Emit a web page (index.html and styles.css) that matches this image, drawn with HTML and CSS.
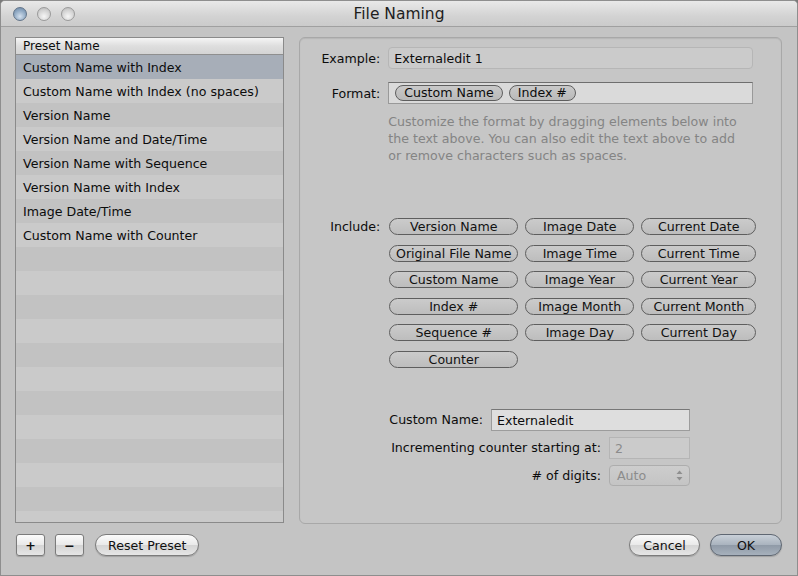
FILE: index.html
```html
<!DOCTYPE html>
<html lang="en">

<head>
    <meta charset="UTF-8">
    <title>File Naming</title>
    <link rel="stylesheet" href="styles.css">
</head>

<body>
    <div class="window">
        <div class="titlebar">
            <div class="lights">
                <span class="light close"></span>
                <span class="light"></span>
                <span class="light"></span>
            </div>
            <div class="title">File Naming</div>
            <div></div>
        </div>

        <div class="main">
            <div class="list">
                <div class="list-head">Preset Name</div>
                <div class="row selected">Custom Name with Index</div>
                <div class="row">Custom Name with Index (no spaces)</div>
                <div class="row">Version Name</div>
                <div class="row">Version Name and Date/Time</div>
                <div class="row">Version Name with Sequence</div>
                <div class="row">Version Name with Index</div>
                <div class="row">Image Date/Time</div>
                <div class="row">Custom Name with Counter</div>
                <div class="row"></div>
                <div class="row"></div>
                <div class="row"></div>
                <div class="row"></div>
                <div class="row"></div>
                <div class="row"></div>
                <div class="row"></div>
                <div class="row"></div>
                <div class="row"></div>
                <div class="row"></div>
                <div class="row"></div>
                <div class="row"></div>
            </div>

            <div class="panel">
                <div class="form-row first">
                    <label class="label">Example:</label>
                    <div class="field example">Externaledit 1</div>
                </div>
                <div class="form-row second">
                    <label class="label">Format:</label>
                    <div class="field format">
                        <span class="token">Custom Name</span>
                        <span class="token">Index #</span>
                    </div>
                </div>
                <p class="help">Customize the format by dragging elements below into<br>
                    the text above. You can also edit the text above to add<br>
                    or remove characters such as spaces.</p>

                <div class="form-row include">
                    <label class="label">Include:</label>
                    <div class="pills">
                        <span class="pill">Version Name</span>
                        <span class="pill">Image Date</span>
                        <span class="pill">Current Date</span>
                        <span class="pill">Original File Name</span>
                        <span class="pill">Image Time</span>
                        <span class="pill">Current Time</span>
                        <span class="pill">Custom Name</span>
                        <span class="pill">Image Year</span>
                        <span class="pill">Current Year</span>
                        <span class="pill">Index #</span>
                        <span class="pill">Image Month</span>
                        <span class="pill">Current Month</span>
                        <span class="pill">Sequence #</span>
                        <span class="pill">Image Day</span>
                        <span class="pill">Current Day</span>
                        <span class="pill">Counter</span>
                    </div>
                </div>

                <div class="options">
                    <div class="opt-row">
                        <label>Custom Name:</label>
                        <div class="input name">Externaledit</div>
                    </div>
                    <div class="opt-row">
                        <label>Incrementing counter starting at:</label>
                        <div class="input small disabled">2</div>
                    </div>
                    <div class="opt-row">
                        <label># of digits:</label>
                        <div class="select">
                            <span>Auto</span>
                            <svg width="7" height="11" viewBox="0 0 7 11">
                                <path d="M3.5 0.5 L6.5 4 L0.5 4 Z" fill="#8f8f8f"/>
                                <path d="M3.5 10.5 L6.5 7 L0.5 7 Z" fill="#8f8f8f"/>
                            </svg>
                        </div>
                    </div>
                </div>
            </div>
        </div>

        <div class="footer">
            <div class="footer-left">
                <button class="square">+</button>
                <button class="square">&minus;</button>
                <button class="push">Reset Preset</button>
            </div>
            <div class="footer-right">
                <button class="push cancel">Cancel</button>
                <button class="push ok">OK</button>
            </div>
        </div>
    </div>
</body>

</html>
```

FILE: styles.css
```css
* {
    margin: 0;
    padding: 0;
    box-sizing: border-box;
    font-family: "DejaVu Sans", Verdana, sans-serif;
}

body {
    width: 798px;
    height: 576px;
    overflow: hidden;
    background: #7a7a7a;
}

.window {
    width: 798px;
    height: 576px;
    background: #c4c4c4;
    border: 1px solid #8e8e8e;
    border-radius: 5px 5px 0 0;
    display: flex;
    flex-direction: column;
    color: #0c0c0c;
    font-size: 12.6px;
}

.titlebar {
    height: 26px;
    flex-shrink: 0;
    display: grid;
    grid-template-columns: 1fr auto 1fr;
    align-items: center;
    background: linear-gradient(#e9e9e9, #d3d3d3 60%, #cbcbcb);
    border-bottom: 1px solid #a0a0a0;
    border-radius: 4px 4px 0 0;
}

.lights {
    display: flex;
    gap: 10px;
    padding-left: 12px;
}

.light {
    width: 14px;
    height: 14px;
    border-radius: 50%;
    border: 1px solid #9a9a9a;
    background: radial-gradient(circle at 50% 70%, #f6f6f6, #d2d2d2 60%, #b4b4b4);
}

.light.close {
    border-color: #627489;
    background: radial-gradient(circle at 50% 70%, #d3e0ee, #91aac4 55%, #6683a2);
}

.title {
    font-size: 15.5px;
    color: #1e1e1e;
    padding-top: 1px;
}

.main {
    display: flex;
    gap: 15px;
    padding: 10px 15px 0 14px;
}

.list {
    width: 270px;
    height: 486px;
    border: 1px solid #8a8a8a;
    overflow: hidden;
    background: #c9c9c9;
}

.list-head {
    height: 17px;
    line-height: 17px;
    padding-left: 7px;
    font-size: 12px;
    border-bottom: 1px solid #8f8f8f;
    background: linear-gradient(#f5f5f5, #dedede 50%, #d4d4d4);
}

.row {
    height: 24px;
    line-height: 26px;
    padding-left: 7px;
    background: #c2c2c2;
    white-space: nowrap;
}

.row:nth-child(odd) {
    background: #cacaca;
}

.row.selected {
    background: #a7aeb8;
}

.panel {
    width: 484px;
    height: 487px;
    border: 1px solid #a8a8a8;
    border-radius: 6px;
    background: #c6c6c6;
    box-shadow: inset 0 1px 1px rgba(0, 0, 0, 0.08);
}

.form-row {
    display: flex;
    align-items: center;
    gap: 8px;
}

.form-row.first {
    margin-top: 9px;
}

.form-row.second {
    margin-top: 13px;
}

.label {
    width: 80px;
    text-align: right;
}

.field {
    width: 365px;
    height: 22px;
    line-height: 21px;
}

.example {
    padding-left: 5px;
    background: #cbcbcb;
    border: 1px solid #b6b6b6;
    border-radius: 4px;
}

.format {
    display: flex;
    align-items: center;
    gap: 6px;
    padding-left: 6px;
    background: #dadada;
    border: 1px solid #999;
    border-top-color: #6e6e6e;
}

.token {
    height: 16px;
    line-height: 14px;
    padding: 0 8px;
    border: 1px solid #5e5e5e;
    border-radius: 8px;
    background: linear-gradient(#c9c9c9, #b9b9b9);
}

.help {
    margin: 9px 0 0 88px;
    line-height: 17px;
    color: #848484;
}

.form-row.include {
    align-items: flex-start;
    margin-top: 54px;
    gap: 9px;
}

.include .label {
    line-height: 17px;
}

.pills {
    display: grid;
    grid-template-columns: 129px 109px 115px;
    column-gap: 7px;
    row-gap: 9.6px;
}

.pill {
    height: 17px;
    line-height: 15px;
    text-align: center;
    white-space: nowrap;
    border: 1px solid #5e5e5e;
    border-radius: 9px;
    background: linear-gradient(#cbcbcb, #bdbdbd);
    color: #111;
}

.options {
    margin-top: 41px;
    margin-right: 91px;
    display: flex;
    flex-direction: column;
    gap: 6px;
}

.opt-row {
    display: flex;
    justify-content: flex-end;
    align-items: center;
    gap: 8px;
}

.input {
    height: 22px;
    line-height: 21px;
    padding-left: 5px;
    background: #dedede;
    border: 1px solid #9c9c9c;
    border-top-color: #777;
}

.input.name {
    width: 199px;
}

.input.small {
    width: 81px;
}

.input.disabled {
    background: #cbcbcb;
    border-color: #b5b5b5;
    color: #8c8c8c;
}

.select {
    width: 81px;
    height: 21px;
    display: flex;
    justify-content: space-between;
    align-items: center;
    padding: 0 6px 0 7px;
    border: 1px solid #adadad;
    border-radius: 4px;
    background: linear-gradient(#cdcdcd, #c4c4c4);
    color: #8c8c8c;
}

.footer {
    display: flex;
    justify-content: space-between;
    padding: 10px 15px 0 15px;
}

.footer-left,
.footer-right {
    display: flex;
    align-items: center;
}

button {
    height: 22px;
    font-size: 12.6px;
    color: #111;
    border: 1px solid #7b7b7b;
    background: linear-gradient(#fbfbfb, #e9e9e9 50%, #d4d4d4 51%, #e6e6e6);
    box-shadow: 0 1px 1px rgba(0, 0, 0, 0.18);
}

.square {
    width: 29px;
    border-radius: 3px;
    font-weight: bold;
    margin-right: 10px;
}

.push {
    border-radius: 11px;
    padding: 0 12px;
    margin-left: 1px;
}

.cancel {
    width: 71px;
    padding: 0;
}

.ok {
    width: 72px;
    padding: 0;
    margin-left: 10px;
    border-color: #5f6772;
    background: linear-gradient(#c9d0d8, #a9b3be 50%, #8f9aa7 51%, #a7b1bc);
}
```
